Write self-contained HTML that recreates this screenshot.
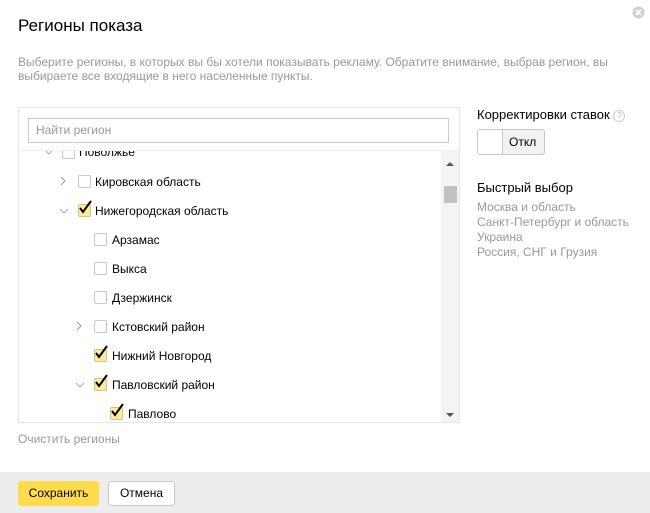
<!DOCTYPE html>
<html><head><meta charset="utf-8"><style>
html,body{margin:0;width:650px;height:513px;overflow:hidden}
body{background:#fff;font-family:"Liberation Sans",sans-serif;position:relative;color:#000}
.a{position:absolute}
.cb{position:absolute;width:11px;height:11px;border:1px solid #c8c8c8;border-radius:2px;background:#fff}
.cb.on{background:#ffeba0;border-color:#d9c27a}
.t{position:absolute;font-size:12px;line-height:14px;white-space:nowrap}
.ck{position:absolute;width:16px;height:16px}
</style></head><body>
<div class="a" style="left:18px;top:16px;font-size:17px">Регионы показа</div>
<svg class="a" style="left:632px;top:6px" width="13" height="13" viewBox="0 0 13 13"><circle cx="6.5" cy="6.5" r="6" fill="#d0d0d0"/><path d="M4 4L9 9M9 4L4 9" stroke="#fff" stroke-width="1.8"/></svg>
<div class="a" style="left:18px;top:55px;font-size:12px;line-height:14px;color:#999;width:600px">Выберите регионы, в которых вы бы хотели показывать рекламу. Обратите внимание, выбрав регион, вы выбираете все входящие в него населенные пункты.</div>

<div class="a" style="left:18px;top:107px;width:440px;height:314px;border:1px solid #e6e6e6;overflow:hidden">
 <div class="a" style="left:9px;top:10px;width:421px;height:25px;border:1px solid #ccc;font-size:12px;color:#999;line-height:23px;padding-left:7px;box-sizing:border-box">Найти регион</div>
 <div class="a" style="left:0;top:42px;width:440px;height:1px;background:#eee"></div>
 <div class="a" style="left:422px;top:43px;width:18px;height:272px;background:#f4f4f4"></div>
 <div class="a" style="left:425px;top:78px;width:13px;height:17px;background:#c1c1c1"></div>
 <div class="a" style="left:427px;top:54px;border:4px solid transparent;border-bottom:4px solid #555;border-top:0"></div>
 <div class="a" style="left:427px;top:305px;border:4px solid transparent;border-top:4px solid #555;border-bottom:0"></div>
</div>
<div class="a" style="left:19px;top:151px;width:421px;height:270px;overflow:hidden">
 <div style="position:absolute;left:-19px;top:-151px;width:460px;height:421px">
 <svg class="a" style="left:44px;top:149px" width="10" height="6"><path d="M1 1L5 5L9 1" stroke="#aaa" fill="none"/></svg><div class="cb" style="left:62px;top:146px"></div><div class="t" style="left:79px;top:145px">Поволжье</div>
 <svg class="a" style="left:60px;top:176px" width="6" height="10"><path d="M1 1L5 5L1 9" stroke="#999" fill="none"/></svg><div class="cb" style="left:78px;top:175px"></div><div class="t" style="left:95px;top:175px">Кировская область</div>
 <svg class="a" style="left:59px;top:208px" width="10" height="6"><path d="M1 1L5 5L9 1" stroke="#aaa" fill="none"/></svg><div class="cb on" style="left:78px;top:204px"></div><svg class="ck" style="left:77px;top:199px"><path d="M3 9L6 13L14 2" stroke="#000" stroke-width="2" fill="none"/></svg><div class="t" style="left:95px;top:204px">Нижегородская область</div>
 <div class="cb" style="left:94px;top:233px"></div><div class="t" style="left:112px;top:233px">Арзамас</div>
 <div class="cb" style="left:94px;top:262px"></div><div class="t" style="left:112px;top:262px">Выкса</div>
 <div class="cb" style="left:94px;top:291px"></div><div class="t" style="left:112px;top:291px">Дзержинск</div>
 <svg class="a" style="left:76px;top:321px" width="6" height="10"><path d="M1 1L5 5L1 9" stroke="#999" fill="none"/></svg><div class="cb" style="left:94px;top:320px"></div><div class="t" style="left:112px;top:320px">Кстовский район</div>
 <div class="cb on" style="left:94px;top:349px"></div><svg class="ck" style="left:93px;top:344px"><path d="M3 9L6 13L14 2" stroke="#000" stroke-width="2" fill="none"/></svg><div class="t" style="left:112px;top:349px">Нижний Новгород</div>
 <svg class="a" style="left:75px;top:382px" width="10" height="6"><path d="M1 1L5 5L9 1" stroke="#aaa" fill="none"/></svg><div class="cb on" style="left:94px;top:378px"></div><svg class="ck" style="left:93px;top:373px"><path d="M3 9L6 13L14 2" stroke="#000" stroke-width="2" fill="none"/></svg><div class="t" style="left:112px;top:378px">Павловский район</div>
 <div class="cb on" style="left:110px;top:407px"></div><svg class="ck" style="left:109px;top:402px"><path d="M3 9L6 13L14 2" stroke="#000" stroke-width="2" fill="none"/></svg><div class="t" style="left:128px;top:407px">Павлово</div>
 </div>
</div>
<div class="a" style="left:18px;top:432px;font-size:12px;color:#999">Очистить регионы</div>

<div class="a" style="left:477px;top:107px;font-size:13px;white-space:nowrap">Корректировки ставок <span style="display:inline-block;width:10px;height:10px;border:1px solid #ccc;border-radius:50%;font-size:8px;line-height:10px;text-align:center;color:#bbb;vertical-align:1px">?</span></div>
<div class="a" style="left:477px;top:129px;width:66px;height:24px;border:1px solid #c8c8c8;border-radius:3px;background:#f2f2f2;overflow:hidden">
 <div class="a" style="left:0;top:0;width:24px;height:24px;background:#fff;border-right:1px solid #c8c8c8"></div>
 <div class="a" style="left:31px;top:5px;font-size:12px">Откл</div>
</div>
<div class="a" style="left:477px;top:180px;font-size:13px">Быстрый выбор</div>
<div class="a" style="left:477px;top:200px;font-size:12px;line-height:15px;color:#999;white-space:nowrap">Москва и область<br>Санкт-Петербург и область<br>Украина<br>Россия, СНГ и Грузия</div>

<div class="a" style="left:0;top:472px;width:650px;height:41px;background:#ededed"></div>
<div class="a" style="left:18px;top:481px;width:81px;height:25px;background:#ffdb4d;border-radius:3px;font-size:12px;line-height:25px;text-align:center">Сохранить</div>
<div class="a" style="left:108px;top:481px;width:65px;height:23px;background:#fff;border:1px solid #c8c8c8;border-radius:3px;font-size:12px;line-height:23px;text-align:center">Отмена</div>
</body></html>
